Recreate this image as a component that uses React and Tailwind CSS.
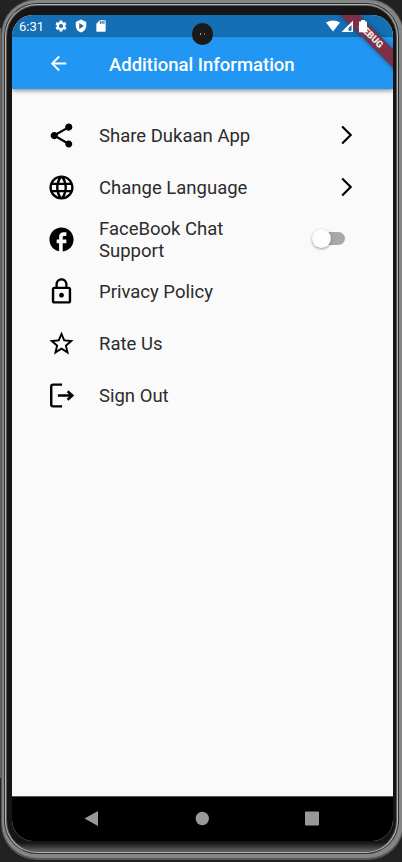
import React from "react";

const glyphs = {
  share: (
    <path d="M18 16.08c-.76 0-1.44.3-1.96.77L8.91 12.7c.05-.23.09-.46.09-.7s-.04-.47-.09-.7l7.05-4.11c.54.5 1.25.81 2.04.81 1.66 0 3-1.34 3-3s-1.34-3-3-3-3 1.34-3 3c0 .24.04.47.09.7L8.04 9.81C7.5 9.31 6.79 9 6 9c-1.66 0-3 1.34-3 3s1.34 3 3 3c.79 0 1.5-.31 2.04-.81l7.12 4.16c-.05.21-.08.43-.08.65 0 1.61 1.31 2.92 2.92 2.92s2.92-1.31 2.92-2.92-1.31-2.92-2.92-2.92z" />
  ),
  globe: (
    <path d="M11.99 2C6.47 2 2 6.48 2 12s4.47 10 9.99 10C17.52 22 22 17.52 22 12S17.52 2 11.99 2zm6.93 6h-2.95c-.32-1.25-.78-2.45-1.38-3.56 1.84.63 3.37 1.91 4.33 3.56zM12 4.04c.83 1.2 1.48 2.53 1.91 3.96h-3.82c.43-1.43 1.08-2.76 1.91-3.96zM4.26 14C4.1 13.36 4 12.69 4 12s.1-1.36.26-2h3.38c-.08.66-.14 1.32-.14 2s.06 1.34.14 2H4.26zm.82 2h2.95c.32 1.25.78 2.45 1.38 3.56-1.84-.63-3.37-1.9-4.33-3.56zm2.95-8H5.08c.96-1.66 2.49-2.93 4.33-3.56C8.81 5.55 8.35 6.75 8.03 8zM12 19.96c-.83-1.2-1.48-2.53-1.91-3.96h3.82c-.43 1.43-1.08 2.76-1.91 3.96zM14.34 14H9.66c-.09-.66-.16-1.32-.16-2s.07-1.35.16-2h4.68c.09.65.16 1.32.16 2s-.07 1.34-.16 2zm.25 5.56c.6-1.11 1.06-2.31 1.38-3.56h2.95c-.96 1.65-2.49 2.93-4.33 3.56zM16.36 14c.08-.66.14-1.32.14-2s-.06-1.34-.14-2h3.38c.16.64.26 1.31.26 2s-.1 1.36-.26 2h-3.38z" />
  ),
  facebook: (
    <path d="M22 12c0-5.52-4.48-10-10-10S2 6.48 2 12c0 4.84 3.44 8.87 8 9.8V15H8v-3h2V9.5C10 7.57 11.57 6 13.5 6H16v3h-2c-.55 0-1 .45-1 1v2h3v3h-3v6.95c5.05-.5 9-4.76 9-9.95z" />
  ),
  lock: (
    <path d="M12 17c1.1 0 2-.9 2-2s-.9-2-2-2-2 .9-2 2 .9 2 2 2zm6-9h-1V6c0-2.76-2.24-5-5-5S7 3.24 7 6v2H6c-1.1 0-2 .9-2 2v10c0 1.1.9 2 2 2h12c1.1 0 2-.9 2-2V10c0-1.1-.9-2-2-2zM8.900 6c0-1.710 1.390-3.100 3.100-3.100s3.100 1.390 3.100 3.100v2H8.900V6zM18 20H6V10h12v10z" />
  ),
  star: (
    <path d="M22 9.24l-7.190-.62L12 2 9.190 8.630 2 9.240l5.460 4.730L5.820 21 12 17.270 18.180 21l-1.630-7.030L22 9.240zM12 15.400l-3.760 2.270 1-4.280-3.320-2.880 4.380-.38L12 6.100l1.710 4.040 4.380.38-3.320 2.880 1 4.280L12 15.400z" />
  ),
  exit: (
    <g fill="none" stroke="currentColor" strokeWidth="2">
      <path d="M12.500 3H5Q3.500 3 3.500 4.500v15Q3.500 21 5 21h7.500" />
      <path d="M9 12h11.500M17 8.500l4 3.500-4 3.500" />
    </g>
  ),
};

const rows = [
  { icon: "share", label: "Share Dukaan App", end: "chevron" },
  { icon: "globe", label: "Change Language", end: "chevron" },
  { icon: "facebook", label: "FaceBook Chat Support", end: "switch" },
  { icon: "lock", label: "Privacy Policy" },
  { icon: "star", label: "Rate Us" },
  { icon: "exit", label: "Sign Out" },
];

function Row({ icon, label, end }) {
  return (
    <li className="flex h-[52px] items-center">
      <svg viewBox="0 0 24 24" className="h-[29px] w-[29px] shrink-0 fill-current text-black">
        {glyphs[icon]}
      </svg>
      <span className="ml-[23px] w-[170px] pt-[3px] text-[18.500px] leading-[21.500px] text-[#2c2c2c]">{label}</span>
      <span className="flex-1" />
      {end === "chevron" && (
        <svg viewBox="0 0 12 20" className="mr-[40px] h-5 w-3 fill-none stroke-black stroke-[2.200]">
          <path d="M1.200 1.500 9.700 10 1.200 18.500" />
        </svg>
      )}
      {end === "switch" && (
        <span className="mr-[48px] mb-px flex h-[13px] w-[33px] items-center rounded-full bg-gradient-to-r from-transparent from-30% to-[#a8a8a8] to-30%">
          <span className="h-[19px] w-[19px] shrink-0 rounded-full bg-[#fdfdfd] shadow-[0_1px_3px_rgba(0,0,0,0.4)]" />
        </span>
      )}
    </li>
  );
}

function StatusBar() {
  return (
    <div className="flex h-[22px] items-center bg-[#146fb5] pl-[7px] text-white">
      <span className="w-[35px] pt-px text-[13px] leading-[21px]">6:31</span>
      <svg viewBox="0 0 24 24" className="h-[14px] w-[14px] fill-white">
        <path d="M19.140 12.940c.04-.3.06-.61.06-.94s-.02-.64-.07-.94l2.030-1.580c.18-.14.23-.41.12-.61l-1.920-3.320c-.12-.22-.37-.29-.59-.22l-2.390.96c-.5-.38-1.030-.7-1.620-.94L14.400 2.810A.48.48 0 0 0 13.920 2.400h-3.840c-.24 0-.43.17-.47.41l-.36 2.540c-.59.24-1.130.57-1.620.94l-2.390-.96c-.22-.08-.47 0-.59.22L2.740 8.870c-.12.21-.08.47.12.61l2.030 1.580c-.05.3-.09.63-.09.94s.02.64.07.94l-2.030 1.580c-.18.14-.23.41-.12.61l1.920 3.320c.12.22.37.29.59.22l2.390-.96c.5.38 1.030.7 1.620.94l.36 2.540c.05.24.24.41.48.41h3.840c.24 0 .44-.17.47-.41l.36-2.540c.59-.24 1.130-.56 1.620-.94l2.390.96c.22.08.47 0 .59-.22l1.920-3.320c.12-.22.07-.47-.12-.61l-2.010-1.580zM12 15.600A3.600 3.600 0 1 1 12 8.400a3.600 3.600 0 0 1 0 7.200z" />
      </svg>
      <svg viewBox="0 0 24 24" className="ml-[6px] h-[14px] w-[14px] fill-white" fillRule="evenodd">
        <path d="M12 1 3 5v6c0 5.550 3.840 10.740 9 12 5.160-1.260 9-6.450 9-12V5l-9-4zM9 7l8 5-8 5V7z" />
      </svg>
      <svg viewBox="0 0 24 24" className="ml-[6px] h-[14px] w-[14px] fill-white">
        <path d="M18 2h-8L4 8v12c0 1.100.900 2 2 2h12c1.100 0 2-.900 2-2V4c0-1.100-.900-2-2-2zm-6 6h-2V4h2v4zm3 0h-2V4h2v4zm3 0h-2V4h2v4z" />
      </svg>
      <span className="flex-1" />
      <svg viewBox="0 0 42 13" className="relative z-20 mr-[25px] h-[13px] w-[42px] fill-white">
        <path d="M0 2.500Q7-1.500 14 2.500L7 11.500Z" />
        <path d="M27 .5V12H15.500ZM25.500 5 22.500 8v2.700h3Z" fillRule="evenodd" />
        <path d="M35 0h4v1.500h2V12.300h-8V1.500h2Z" />
      </svg>
    </div>
  );
}

function Screen() {
  return (
    <div className="relative flex h-[826px] w-[381px] flex-col overflow-hidden rounded-[21px] bg-[#fafafa]">
      <StatusBar />
      <header className="relative flex h-[52px] items-center bg-[#2196f3] pl-[35px] text-white shadow-[0_2px_4px_rgba(0,0,0,0.4)]">
        <svg viewBox="0 0 24 24" className="h-[23px] w-[23px] fill-white">
          <path d="M20 11H7.830l5.590-5.590L12 4l-8 8 8 8 1.410-1.410L7.830 13H20v-2z" />
        </svg>
        <h1 className="ml-[39px] pt-[3px] text-[18.500px] leading-6 font-medium whitespace-nowrap">Additional Information</h1>
      </header>
      <ul className="flex-1 pt-5 pl-[35px]">
        {rows.map((row) => (
          <Row key={row.label} {...row} />
        ))}
      </ul>
      <nav className="h-[45px] border-t border-[#555] bg-black">
        <svg viewBox="0 0 381 44" className="h-[44px] w-[381px] fill-[#999]">
          <path d="M72.500 21.500 86 14v15Z" />
          <circle cx="190.300" cy="21.500" r="6.700" />
          <rect x="293" y="14.500" width="14" height="14" rx="1" />
        </svg>
      </nav>
      <div className="absolute top-[16px] left-[310px] z-10 flex h-[12.700px] w-[100px] rotate-45 items-center justify-center bg-[#7b3047] pr-[4px] text-[9.500px] font-black text-white/90 shadow-[0_0_5px_rgba(0,0,0,0.4)]">
        DEBUG
      </div>
      <div className="absolute top-[8px] left-[180px] flex h-[22px] w-[21px] items-center justify-center gap-[3px] rounded-full bg-[#1a1a1a]">
        <span className="h-[2px] w-px bg-[#a5a56b]" />
        <span className="h-[2px] w-px bg-[#b65540]" />
      </div>
    </div>
  );
}

export default function App() {
  return (
    <div className="flex h-[862px] w-[402px] items-start overflow-hidden bg-[#222]" style={{ fontFamily: "Roboto, 'Liberation Sans', sans-serif" }}>
      <div className="mt-[28px] h-[750px] w-px shrink-0 bg-[#666]" />
      <div className="-mt-px h-[861px] w-[403px] shrink-0 rounded-[36px] bg-[#555] pt-px pl-px">
        <div className="h-[858px] w-[401px] rounded-[35px] bg-[#858585] pt-[3px] pl-[2px]">
          <div className="h-[851px] w-[395px] rounded-[33px] bg-[#303030] pt-px pl-px">
            <div className="h-[849px] w-[393px] rounded-[32px] bg-[#b5b5b5] pt-px pl-px">
              <div className="h-[847px] w-[391px] rounded-[31px] bg-[#5a5a5a] pt-px pl-px">
                <div className="h-[845px] w-[389px] rounded-[30px] bg-gradient-to-b from-[#151515] from-[99%] to-[#606060] pt-[9px] pl-[5px]">
                  <Screen />
                </div>
              </div>
            </div>
          </div>
        </div>
      </div>
    </div>
  );
}
